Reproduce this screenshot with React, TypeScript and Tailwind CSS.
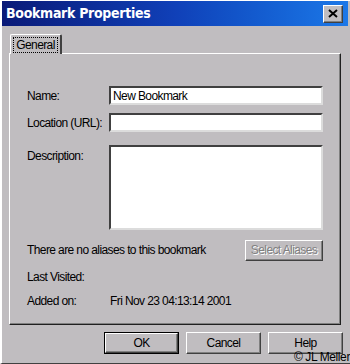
export default function App() {
  const raised = "border border-t-white border-l-white border-r-[#404040] border-b-[#404040] shadow-[inset_-1px_-1px_0_#808080]";
  const sunken = "bg-white border-2 border-t-[#404040] border-l-[#404040] border-r-[#dcdcdc] border-b-[#dcdcdc]";

  return (
    <div className="w-[350px] h-[364px] bg-[#c0bdc0] overflow-hidden relative font-['Liberation_Sans',Arial,sans-serif] text-[12px] tracking-[-0.6px] text-black border-l-2 border-t border-l-white border-t-white border-b border-b-[#404040]">
      {/* Title bar */}
      <div className="h-[25px] mr-[2px] flex items-center justify-between pl-[4px] pr-[4px] bg-gradient-to-r from-[#0a1a78] via-[#1040b8] to-[#1c78e8]">
        <span className="text-white font-bold text-[14px] tracking-[-0.3px] font-['DejaVu_Sans_Condensed','DejaVu_Sans','Liberation_Sans',sans-serif]">Bookmark Properties</span>
        <div className={`w-[20px] h-[18px] mr-[1px] bg-[#c0bdc0] flex items-center justify-center ${raised}`}>
          <svg width="10" height="9" viewBox="0 0 10 9">
            <path d="M1 1 L9 8 M9 1 L1 8" stroke="black" strokeWidth="2" />
          </svg>
        </div>
      </div>

      {/* Tab */}
      <div className="mt-[7px] ml-[8px] h-[20px] flex items-end">
        <div className="w-[52px] h-[20px] border-t border-l border-t-white border-l-white border-r-2 border-r-[#404040] rounded-tl-[2px] rounded-tr-[2px] flex items-center justify-center relative z-10 -mb-px bg-[#c0bdc0]">
          <span className="border border-dotted border-black px-[2px] leading-[14px]">General</span>
        </div>
      </div>

      {/* Panel */}
      <div className="ml-[7px] w-[332px] h-[272px] border border-t-white border-l-white border-r-[#202020] border-b-[#202020] shadow-[inset_-1px_-1px_0_#808080] pl-[17px] pr-[17px] pt-[32px]">
        <div className="flex items-center h-[19px]">
          <span className="w-[82px] whitespace-nowrap">Name:</span>
          <div className={`flex-1 h-[19px] ${sunken} flex items-center px-[2px]`}>New Bookmark</div>
        </div>
        <div className="flex items-center h-[19px] mt-[8px]">
          <span className="w-[82px] whitespace-nowrap">Location (URL):</span>
          <div className={`flex-1 h-[19px] ${sunken}`} />
        </div>
        <div className="flex items-start mt-[13px]">
          <span className="w-[82px] mt-[2px] whitespace-nowrap">Description:</span>
          <div className={`flex-1 h-[85px] ${sunken}`} />
        </div>
        <div className="flex items-center justify-between mt-[10px] h-[20px]">
          <span className="whitespace-nowrap">There are no aliases to this bookmark</span>
          <div className={`w-[78px] h-[21px] bg-[#c0bdc0] flex items-center justify-center whitespace-nowrap text-[#808080] [text-shadow:1px_1px_0_#ffffff] ${raised}`}>Select Aliases</div>
        </div>
        <div className="mt-[10px] h-[14px] leading-[14px]">Last Visited:</div>
        <div className="flex mt-[10px] h-[14px] leading-[14px]">
          <span className="w-[83px]">Added on:</span>
          <span>Fri Nov 23 04:13:14 2001</span>
        </div>
      </div>

      {/* Buttons */}
      <div className="flex gap-[7px] mt-[7px] ml-[102px]">
        <div className="w-[75px] h-[22px] border border-black">
          <div className={`w-full h-full flex items-center justify-center ${raised}`}>OK</div>
        </div>
        <div className={`w-[75px] h-[22px] flex items-center justify-center ${raised}`}>Cancel</div>
        <div className={`w-[75px] h-[22px] flex items-center justify-center ${raised}`}>Help</div>
      </div>

      <div className="absolute right-0 bottom-0 text-[12px] leading-[12px] tracking-[-0.4px]">© JL Meller</div>
    </div>
  );
}
